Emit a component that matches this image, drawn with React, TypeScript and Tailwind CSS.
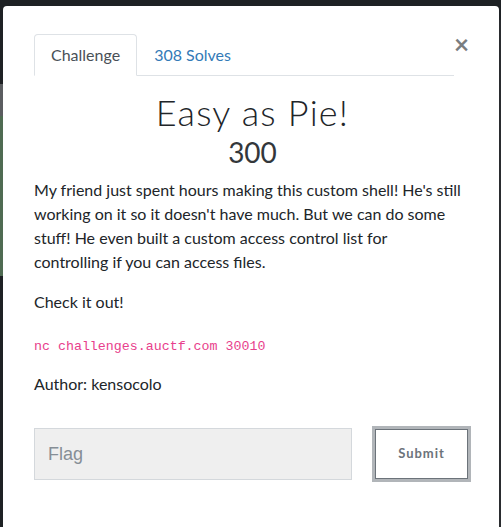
export default function App() {
  return (
    <div className="relative w-[501px] h-[527px] overflow-hidden bg-[#1e2124]">
      {/* dimmed page behind the modal */}
      <div className="absolute left-0 top-[84px] w-[3px] h-[50px] bg-[#5b5d60]" />
      <div className="absolute left-0 top-[116px] w-[3px] h-[160px] bg-[#4f6b52]" />
      <div className="absolute right-0 top-[20px] w-[3px] h-[508px] bg-[#2a2c2f]" />

      <div
        className="absolute left-[3px] top-[6px] w-[496px] h-[540px] bg-white rounded-[4px]"
        style={{ fontFamily: "Lato, 'Open Sans', sans-serif" }}
      >
        <div className="pl-[31px] pr-[28px] pt-[28px]">
          <div className="flex items-start">
            <div className="flex w-[420px] border-b border-[#dee2e6]">
              <div className="-mb-px px-4 py-2 text-[16px] leading-6 text-[#495057] bg-white border border-[#dee2e6] border-b-white rounded-t-[4px]">
                Challenge
              </div>
              <div className="-mb-px px-4 py-2 text-[16px] leading-6 text-[#337ab7] border border-transparent">
                308 Solves
              </div>
            </div>
            <button className="ml-auto mr-[2px] mt-[-3px] text-[26px] leading-none font-bold text-[#7a7d80]">
              ×
            </button>
          </div>

          <h3 className="mt-[16px] text-center text-[36px] leading-[40px] font-light tracking-[1.2px] text-[#212529]">
            Easy as Pie!
          </h3>
          <h4 className="text-center text-[28px] leading-[40px] text-[#33373b]">
            300
          </h4>

          <div className="mt-[6px] text-[16px] leading-6 text-[#212529] pr-[8px]">
            <p>
              My friend just spent hours making this custom shell! He's still working on it so it
              doesn't have much. But we can do some stuff! He even built a custom access control
              list for controlling if you can access files.
            </p>
            <p className="mt-4">Check it out!</p>
            <p className="mt-4 leading-7">
              <code
                className="text-[13.3px] text-[#e83e8c]"
                style={{ fontFamily: "'Liberation Mono', 'DejaVu Sans Mono', monospace" }}
              >
                nc challenges.auctf.com 30010
              </code>
            </p>
            <p className="mt-[11px]">Author: kensocolo</p>
          </div>

          <div className="mt-[30px] flex items-center">
            <input
              placeholder="Flag"
              className="w-[318px] h-[52px] px-[13px] bg-[#efefef] border border-[#d4d8dc] text-[18px] placeholder:text-[#868e96] outline-none"
              style={{ fontFamily: "'Liberation Sans', Arial, sans-serif" }}
            />
            <button className="ml-[20px] w-[99px] h-[56px] border-[3px] border-[#b1b5b9] flex">
              <span className="flex-1 flex items-center justify-center border border-[#6c737a] text-[13px] font-bold tracking-[1px] text-[#6c737a]">
                Submit
              </span>
            </button>
          </div>
        </div>
      </div>
    </div>
  );
}
